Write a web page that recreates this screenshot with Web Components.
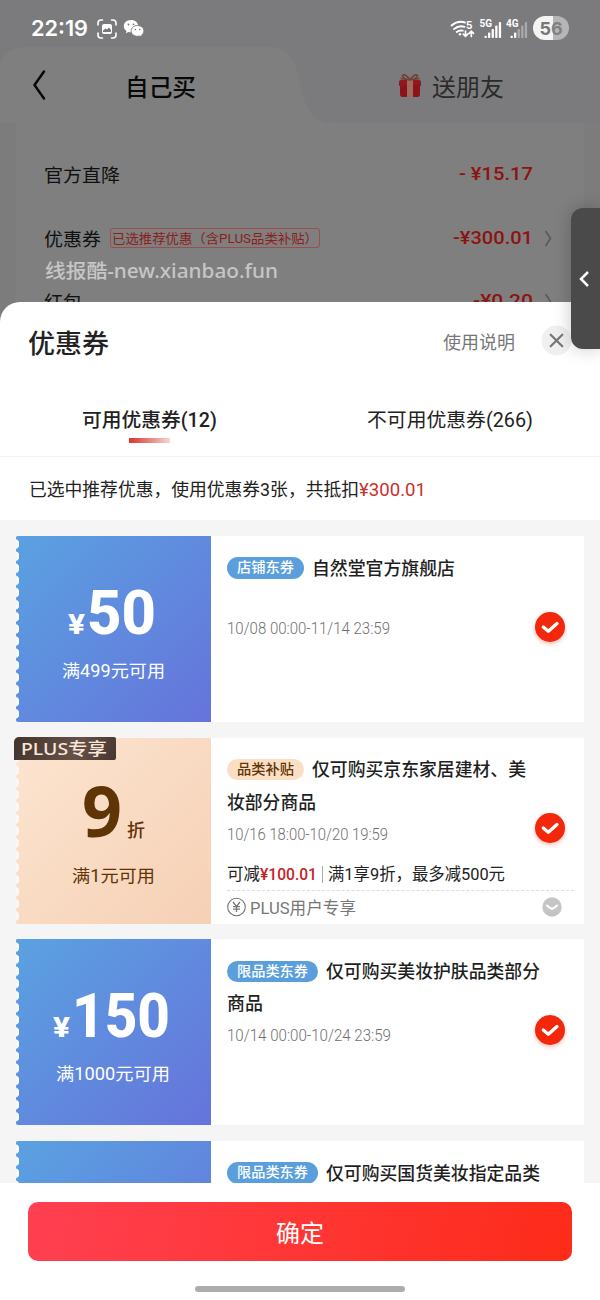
<!DOCTYPE html>
<html lang="zh-CN">
<head>
<meta charset="utf-8">
<title>优惠券</title>
<style>
  html, body { margin: 0; padding: 0; background: #fff; }
  body { width: 600px; height: 1300px; overflow: hidden; font-family: Roboto, "Noto Sans CJK SC", sans-serif; }
</style>
</head>
<body>
<phone-screen></phone-screen>

<script>
const define = (name, html, setup) => {
  const tpl = document.createElement('template');
  tpl.innerHTML = html;
  customElements.define(name, class extends HTMLElement {
    constructor() {
      super();
      this.attachShadow({ mode: 'open' }).append(tpl.content.cloneNode(true));
    }
    connectedCallback() { if (setup) setup.call(this, this.shadowRoot); }
  });
};

/* One line of text, condensed or widened to the advance width in "w". */
define('fit-text', `
<style>
  :host { display: block; flex: none; white-space: nowrap; }
  span { display: inline-block; transform-origin: 0 50%; vertical-align: top; }
</style><span><slot></slot></span>`, function (root) {
  const w = +this.getAttribute('w');
  const span = root.querySelector('span');
  this.style.width = w + 'px';
  const natural = span.getBoundingClientRect().width;
  if (natural) span.style.transform = `scaleX(${w / natural})`;
});

define('status-bar', `
<style>
  :host { display: flex; height: 47px; box-sizing: border-box; padding: 5px 31px 0; align-items: flex-start; color: #fff; }
  fit-text { font: 600 22px/47px Inter, sans-serif; }
  svg { display: block; flex: none; }
  .scan { margin: 14px 0 0 9px; }
  .chat { margin: 14px 0 0 6px; }
  .wifi { margin: 13px 0 0 auto; }
  .net { display: grid; margin: 13px 0 0 4.500px; position: relative; }
  .net b { position: absolute; left: 0; top: 0; font: 700 10px/11px Roboto, sans-serif; }
  .battery { margin: 11px 0 0 5px; width: 36px; height: 24px; border-radius: 12px; text-align: center;
    background: linear-gradient(90deg, #f4f4f4 55%, #b5b5b6 55%); color: #777; font: 700 18px/25px Inter, sans-serif; }
  .battery i { font-style: normal; color: #808081; }
</style>
<fit-text w="57">22:19</fit-text>
<svg class="scan" width="20" height="20" viewBox="0 0 20 20" fill="none" stroke="#fff" stroke-width="1.600" stroke-linecap="round"><path d="M1 6V4Q1 1 4 1H5.500M14.500 1H16Q19 1 19 4V6M19 14V16Q19 19 16 19H14.500M5.500 19H4Q1 19 1 16V14"/><rect x="5" y="5" width="10" height="10" rx="2" fill="#fff" stroke="none"/><path d="M6 13V11.500L8.500 9.500L10 10.500L12 8.500L14 11V13Z" fill="#777" stroke="none"/></svg>
<svg class="chat" width="22" height="20" viewBox="0 0 22 20"><path fill="#fff" d="M8 1C3.600 1 .8 3.800.8 7.200c0 2 1 3.700 2.700 4.800l-.7 2.300 2.600-1.300c.7.2 1.500.3 2.600.3 4.400 0 7.200-2.600 7.200-6.100S12.300 1 8 1z"/><path fill="#fff" stroke="#777" stroke-width=".9" d="M14.500 6.500c-3.700 0-6.400 2.400-6.400 5.400s2.700 5.400 6.400 5.400c.8 0 1.500-.1 2.200-.3l2.300 1.200-.6-2c1.500-1 2.500-2.500 2.500-4.300 0-3-2.700-5.400-6.400-5.400z"/><g fill="#777"><circle cx="5.500" cy="5.500" r=".9"/><circle cx="10.500" cy="5.300" r=".9"/><circle cx="12.300" cy="10.500" r=".8"/><circle cx="16.700" cy="10.500" r=".8"/></g></svg>
<svg class="wifi" width="25" height="22" viewBox="0 0 25 22" fill="none" stroke="#fff" stroke-width="1.900" stroke-linecap="round"><path d="M1.500 7.500Q8 2.200 15 4.500M4 10.900Q9 6.900 14.500 8.800M6.700 13.900Q9.500 11.900 12.800 12.700"/><circle cx="10" cy="16.300" r="1.300" fill="#fff" stroke="none"/><path d="M15.500 13V18M13.300 16.200L15.500 18.400L17.700 16.200M21.300 18.500V13.500M19.100 15.300L21.300 13.100L23.500 15.300" stroke-width="1.700"/><text x="16" y="10.500" font-family="Inter" font-weight="700" font-size="10" fill="#fff" stroke="none">5</text></svg>
<div class="net"><b>5G</b><svg width="22" height="22" viewBox="0 0 22 22" fill="#fff"><rect x="4.500" y="17.800" width="2.300" height="2.200" rx=".8"/><rect x="8" y="14.500" width="2.300" height="5.500" rx=".8"/><rect x="11.600" y="11" width="2.300" height="9" rx=".8"/><rect x="15.200" y="7.500" width="2.300" height="12.500" rx=".8"/><rect x="18.800" y="4" width="2.300" height="16" rx=".8"/></svg></div>
<div class="net"><b>4G</b><svg width="22" height="22" viewBox="0 0 22 22" fill="#fff"><rect x="4.500" y="17.800" width="2.300" height="2.200" rx=".8"/><rect x="8" y="14.500" width="2.300" height="5.500" rx=".8"/><g fill="#aaa"><rect x="11.600" y="11" width="2.300" height="9" rx=".8"/><rect x="15.200" y="7.500" width="2.300" height="12.500" rx=".8"/><rect x="18.800" y="4" width="2.300" height="16" rx=".8"/></g></svg></div>
<div class="battery">5<i>6</i></div>`);

define('order-tabs', `
<style>
  :host { display: grid; grid-template-columns: 300px 300px; height: 76px; position: relative; line-height: 82px; }
  .shape { position: absolute; inset: 0; }
  .mine, .gift { display: flex; align-items: flex-start; position: relative; }
  .mine { padding-left: 33px; font-size: 23.5px; font-weight: 500; color: #080808; }
  .mine svg { margin: 23px 79px 0 0; }
  .gift { padding-left: 98px; font-size: 23.5px; color: #2b2b2c; }
  .gift svg { margin: 26px 10px 0 0; }
  svg { flex: none; }
</style>
<svg class="shape" width="600" height="76"><path d="M0 76V20Q4 0 28 0H268C292 0 295 15 299 32C304 54 308 76 332 76Z" fill="#7f7f7f"/></svg>
<div class="mine"><svg width="13" height="31" viewBox="0 0 13 31" fill="none" stroke="#060606" stroke-width="2.400" stroke-linecap="round" stroke-linejoin="round"><path d="M11 1.500L1.500 15L11 28.500"/></svg><fit-text w="71">自己买</fit-text></div>
<div class="gift"><svg width="24" height="25" viewBox="0 0 24 25"><path d="M1 9Q1 7 3 7H21Q23 7 23 9V13H1Z" fill="#8f1a1e"/><path d="M2 12H22V21Q22 24 19.500 24H4.500Q2 24 2 21Z" fill="#8a1419"/><path d="M9 7H15V24H9Z" fill="#a06a5e"/><path d="M12 7L7.500 6Q3 3 5 2Q8 1 12 7M12 7L16.500 6Q21 3 19 2Q16 1 12 7M12 7L2.500 5.500M12 7L21.500 5.500" fill="none" stroke="#704238" stroke-width="1.600"/></svg><fit-text w="72">送朋友</fit-text></div>`);

define('price-row', `
<style>
  :host { display: flex; height: 40px; line-height: 40px; align-items: center; padding: 0 47px 0 44px; font-size: 18.7px; color: #101010; }
  .price { margin-left: auto; font-size: 19px; font-weight: 500; color: #8d1311; margin-top: -4px; }
  .tag { margin: -5px 0 0 9px; box-sizing: border-box; width: 210px; height: 20px; border: 1px solid #984f4d; border-radius: 3px;
    padding-left: 1px; font-size: 13px; line-height: 19px; color: #8d1d1b; }
  svg { flex: none; margin: -3px 0 0 11px; }
  [hidden] { display: none; }
</style>
<fit-text class="label"></fit-text><div class="tag" hidden></div><fit-text class="price"></fit-text>
<svg width="9" height="18" viewBox="0 0 9 18" fill="none" stroke="#5a5a5a" stroke-width="1.700"><path d="M1.500 1L6.500 8.500L1.500 16"/></svg>`, function (root) {
  const fit = (cls, text, w) => {
    const old = root.querySelector(cls), el = document.createElement('fit-text');
    el.className = cls.slice(1); el.textContent = text; el.setAttribute('w', w);
    old.replaceWith(el);
  };
  fit('.label', this.getAttribute('label'), this.getAttribute('label-w'));
  fit('.price', this.getAttribute('price'), this.getAttribute('price-w'));
  const tag = this.getAttribute('tag');
  if (tag) {
    const box = root.querySelector('.tag');
    box.hidden = false;
    box.innerHTML = `<fit-text w="206">${tag}</fit-text>`;
  }
  if (this.hasAttribute('plain')) root.querySelector('svg').style.visibility = 'hidden';
});

define('order-page', `
<style>
  :host { display: block; height: 330px; overflow: hidden; background: #7b7b7d; }
  .body { height: 207px; background: linear-gradient(90deg, #7c7c7c 16px, #7f7f7f 16px, #7f7f7f 584px, #7c7c7c 584px); padding-top: 33px; box-sizing: border-box; }
  .mark { margin: -3px 0 0 45px; height: 30px; font: 500 19.5px/28px "Noto Sans", "Noto Sans CJK SC", sans-serif; color: #c6c6c6; }
  price-row + price-row { margin-top: 24px; }
  .last { margin-top: -4px; }
</style>
<status-bar></status-bar>
<order-tabs></order-tabs>
<div class="body">
  <price-row plain label="官方直降" label-w="76" price="- ¥15.17" price-w="74"></price-row>
  <price-row label="优惠券" label-w="57" tag="已选推荐优惠（含PLUS品类补贴）" price="-¥300.01" price-w="80"></price-row>
  <div class="mark"><fit-text w="233">线报酷-new.xianbao.fun</fit-text></div>
  <price-row class="last" label="红包" label-w="38" price="-¥0.20" price-w="60"></price-row>
</div>`);

define('edge-handle', `
<style>
  :host { display: grid; place-items: center; width: 29px; height: 141px; border-radius: 12px 0 0 12px; background: #4a4a4a; box-shadow: 0 0 18px rgba(0,0,0,.22); }
  svg { margin-right: 3px; }
</style>
<svg width="12" height="18" viewBox="0 0 12 18" fill="none" stroke="#fff" stroke-width="2.500"><path d="M10 2L3 9L10 16"/></svg>`);

define('sheet-head', `
<style>
  :host { display: block; background: #fff; border-radius: 20px 20px 0 0; height: 218px; color: #222; }
  .title { display: flex; height: 82px; line-height: 84px; padding-left: 28px; }
  .title .name { font-size: 26.5px; font-weight: 500; }
  .title .help { margin-left: 333.500px; font-size: 17.800px; color: #777; line-height: 82px; }
  .close { margin: 23px 0 0 26px; }
  .tabs { display: grid; grid-template-columns: 300px 300px; height: 72px; line-height: 74px; border-bottom: 1px solid #f3f3f3; font-size: 19.4px; }
  .on { padding-left: 82px; font-weight: 500; position: relative; }
  .on::after { content: ""; position: absolute; left: 129px; top: 54px; width: 41px; height: 5px; background: linear-gradient(90deg, #d5352c, #f8d5d1); }
  .off { padding-left: 67px; }
  .info { display: flex; height: 64px; line-height: 67px; padding-left: 29px; font-size: 17.700px; }
  .info .sum { color: #c8322c; }
</style>
<div class="title"><fit-text class="name" w="81">优惠券</fit-text><fit-text class="help" w="72">使用说明</fit-text>
<svg class="close" width="31" height="31" viewBox="0 0 31 31"><circle cx="15.500" cy="15.500" r="15" fill="#f0f0f0"/><path d="M9.700 9.700L21.300 21.300M21.300 9.700L9.700 21.300" stroke="#777" stroke-width="2.200" stroke-linecap="round"/></svg></div>
<div class="tabs"><div class="on"><fit-text w="135">可用优惠券(12)</fit-text></div><div class="off"><fit-text w="166">不可用优惠券(266)</fit-text></div></div>
<div class="info"><fit-text w="330">已选中推荐优惠，使用优惠券3张，共抵扣</fit-text><fit-text class="sum" w="67">¥300.01</fit-text></div>`);

define('check-mark', `
<style>:host { display: block; width: 30px; height: 30px; border-radius: 50%; background: #f2270c; box-shadow: 0 2px 4px rgba(242,39,12,.3); } svg { display: block; }</style>
<svg width="30" height="30" viewBox="0 0 30 30" fill="none" stroke="#fff" stroke-width="3.300" stroke-linecap="round" stroke-linejoin="round"><path d="M8.300 15L13.300 19.300L22 11.500"/></svg>`);

define('coupon-card', `
<style>
  :host { display: grid; grid-template-columns: 196px 1fr; height: 186px; color: #1f1f1f; }
  .face { margin-left: 1px; color: #fff; background:
      radial-gradient(ellipse 3.500px 5px at 0 50%, #f7fafd 88%, transparent) 0 2px / 5px 12.130px repeat-y,
      linear-gradient(135deg, #5aa2e1, #6673db); display: grid; grid-template-rows: 116px 40px; position: relative; }
  :host([plus]) .face { color: #5f3407; background:
      radial-gradient(ellipse 3.500px 5px at 0 50%, #f9f8f7 88%, transparent) 0 2px / 5px 12.130px repeat-y,
      linear-gradient(135deg, #fde5d0, #f5d0b5); }
  .info { background: #fff; position: relative; display: flex; flex-direction: column; padding-left: 16px; }
  check-mark { position: absolute; right: 19.500px; top: 75.500px; }
</style>
<div class="face"><slot name="amount"></slot><slot name="rule"></slot><slot name="badge"></slot></div>
<div class="info"><slot></slot><check-mark></check-mark></div>`);

define('coupon-amount', `
<style>
  :host, div { display: flex; height: 116px; align-items: flex-end; }
  .unit { font: 800 27px/30px Roboto, sans-serif; margin-bottom: 12.500px; }
  .num { font: 800 62px/62px Roboto, sans-serif; margin-bottom: 8px; }
</style>
<div></div>`, function (root) {
  const [unit, uw, num, nw, left, gap] = this.getAttribute('value').split(',');
  root.querySelector('div').innerHTML =
    `<fit-text class="unit" style="margin-left:${left}px" w="${uw}">${unit}</fit-text><fit-text class="num" style="margin-left:${gap}px" w="${nw}">${num}</fit-text>`;
});

define('discount-amount', `
<style>
  :host { display: flex; height: 116px; align-items: flex-end; padding-left: 66px; }
  .num { font: 700 70px/70px "Noto Sans", sans-serif; margin-bottom: 9px; }
  .unit { font: 500 18px/24px "Noto Sans CJK SC", sans-serif; margin: 0 0 13px 5px; }
</style>
<fit-text class="num" w="40">9</fit-text><fit-text class="unit" w="18">折</fit-text>`);

define('coupon-rule', `
<style>:host { display: block; font-size: 17.600px; line-height: 38px; }</style><slot></slot>`);

define('plus-badge', `
<style>
  :host { display: block; position: absolute; left: -2px; top: -1px; width: 102px; height: 23px; box-sizing: border-box; padding-left: 7px;
    border-radius: 5px 2px 2px 0; background: linear-gradient(110deg, #43332c, #665148 60%, #463730); color: #f9e8d9; font: 500 17px/24px "Noto Sans", "Noto Sans CJK SC", sans-serif; }
</style><fit-text w="86">PLUS专享</fit-text>`);

define('coupon-title', `
<style>
  :host { display: block; padding-top: 16px; font-size: 17.800px; font-weight: 500; line-height: 33px; }
  .first { display: flex; align-items: center; height: 32px; }
  .pill { height: 21.500px; border-radius: 11px; background: #5a9fdc; color: #fff; font-size: 13.700px; line-height: 21px; padding: 0 10px; }
  :host([warm]) .pill { background: #fbdfc4; color: #5f3407; }
  .name { margin-left: 8px; }
  .more { height: 32px; }
</style><div class="text"></div>`, function (root) {
  const a = n => this.getAttribute(n);
  root.querySelector('.text').innerHTML =
    `<div class="first"><div class="pill"><fit-text w="${a('pill-w')}">${a('pill')}</fit-text></div><fit-text class="name" w="${a('w')}">${a('text')}</fit-text></div>` +
    (a('more') ? `<fit-text class="more" w="${a('more-w')}">${a('more')}</fit-text>` : '');
});

define('coupon-date', `
<style>:host { display: block; height: 32px; line-height: 33px; font-size: 17.300px; font-weight: 300; color: #6f6f6f; }</style><slot></slot>`);

define('coupon-extra', `
<style>
  :host { display: block; color: #222; }
  .save { display: flex; box-sizing: border-box; height: 41px; line-height: 39px; padding-top: 5px; margin-right: 10px; font-size: 16.500px; border-bottom: 1px dashed #ddd; }
  .save b { font-weight: 500; color: #c4232b; }
  .bar { width: 1px; height: 17px; margin: 11px 5px 0 5px; background: #aaa; }
  .user { display: flex; align-items: center; height: 33px; font-size: 16.500px; line-height: 34px; color: #777; padding-right: 22px; }
  .user fit-text { margin: 4px auto 0 4px; }
  svg { flex: none; }
</style>
<div class="save"><fit-text w="33">可减</fit-text><b><fit-text w="57">¥100.01</fit-text></b><i class="bar"></i><fit-text w="177">满1享9折，最多减500元</fit-text></div>
<div class="user"><svg width="19" height="20" viewBox="0 0 19 20" fill="none" stroke="#777"><circle cx="9.500" cy="10" r="8.800" stroke-width="1.100"/><path d="M6 5L9.500 9.500L13 5M9.500 9.500V15M6 9.700H13M6 12.200H13" stroke-width="1.300"/></svg><fit-text w="106">PLUS用户专享</fit-text><svg width="20" height="20" viewBox="0 0 20 20"><circle cx="10" cy="10" r="9.700" fill="#c5c5c5"/><path d="M5 8.500Q7 10.500 10 11.800Q13 10.500 15 8.500" fill="none" stroke="#fff" stroke-width="2" stroke-linecap="round"/></svg></div>`);

define('coupon-list', `
<style>
  :host { display: flex; flex-direction: column; gap: 15.700px; height: 663px; box-sizing: border-box; padding: 16px 16px 0 15px; overflow: hidden; background: #f5f5f5; }
  coupon-card { flex: none; }
</style>
<coupon-card>
  <coupon-amount slot="amount" value="¥,17,50,69,52,2"></coupon-amount>
  <coupon-rule slot="rule" style="padding-left:46px"><fit-text w="103">满499元可用</fit-text></coupon-rule>
  <coupon-title pill="店铺东券" pill-w="57" text="自然堂官方旗舰店" w="143"></coupon-title>
  <coupon-date style="margin-top:28px"><fit-text w="163">10/08 00:00-11/14 23:59</fit-text></coupon-date>
</coupon-card>
<coupon-card plus>
  <discount-amount slot="amount"></discount-amount>
  <coupon-rule slot="rule" style="padding:3px 0 0 56px"><fit-text w="83">满1元可用</fit-text></coupon-rule>
  <plus-badge slot="badge"></plus-badge>
  <coupon-title warm pill="品类补贴" pill-w="57" text="仅可购买京东家居建材、美" w="214" more="妆部分商品" more-w="89"></coupon-title>
  <coupon-date><fit-text w="161">10/16 18:00-10/20 19:59</fit-text></coupon-date>
  <coupon-extra></coupon-extra>
</coupon-card>
<coupon-card>
  <coupon-amount slot="amount" value="¥,17,150,98,37,2"></coupon-amount>
  <coupon-rule slot="rule" style="padding-left:40px"><fit-text w="114">满1000元可用</fit-text></coupon-rule>
  <coupon-title pill="限品类东券" pill-w="71" text="仅可购买美妆护肤品类部分" w="214" more="商品" more-w="36"></coupon-title>
  <coupon-date><fit-text w="164">10/14 00:00-10/24 23:59</fit-text></coupon-date>
</coupon-card>
<coupon-card>
  <coupon-title pill="限品类东券" pill-w="71" text="仅可购买国货美妆指定品类" w="214"></coupon-title>
</coupon-card>`);

define('confirm-bar', `
<style>
  :host { display: flex; flex-direction: column; align-items: center; height: 117px; background: #fff; padding-top: 19px; box-sizing: border-box; }
  button { all: unset; display: grid; justify-content: center; width: 544px; height: 59px; border-radius: 10px; background: linear-gradient(100deg, #ff4052, #ff3635 50%, #fd2b19); color: #fff; font-size: 23.500px; line-height: 65px; }
  fit-text { height: 59px; }
  .home { width: 210px; height: 6px; border-radius: 3px; background: #adadad; margin-top: 24.500px; }
</style>
<button><fit-text w="48">确定</fit-text></button><div class="home"></div>`);

define('phone-screen', `
<style>
  :host { display: block; position: relative; width: 600px; height: 1300px; overflow: hidden; }
  .sheet { position: absolute; left: 0; top: 302px; width: 600px; }
  edge-handle { position: absolute; right: 0; top: 208px; }
</style>
<order-page></order-page>
<div class="sheet"><sheet-head></sheet-head><coupon-list></coupon-list><confirm-bar></confirm-bar></div>
<edge-handle></edge-handle>`);
</script>
</body>
</html>
